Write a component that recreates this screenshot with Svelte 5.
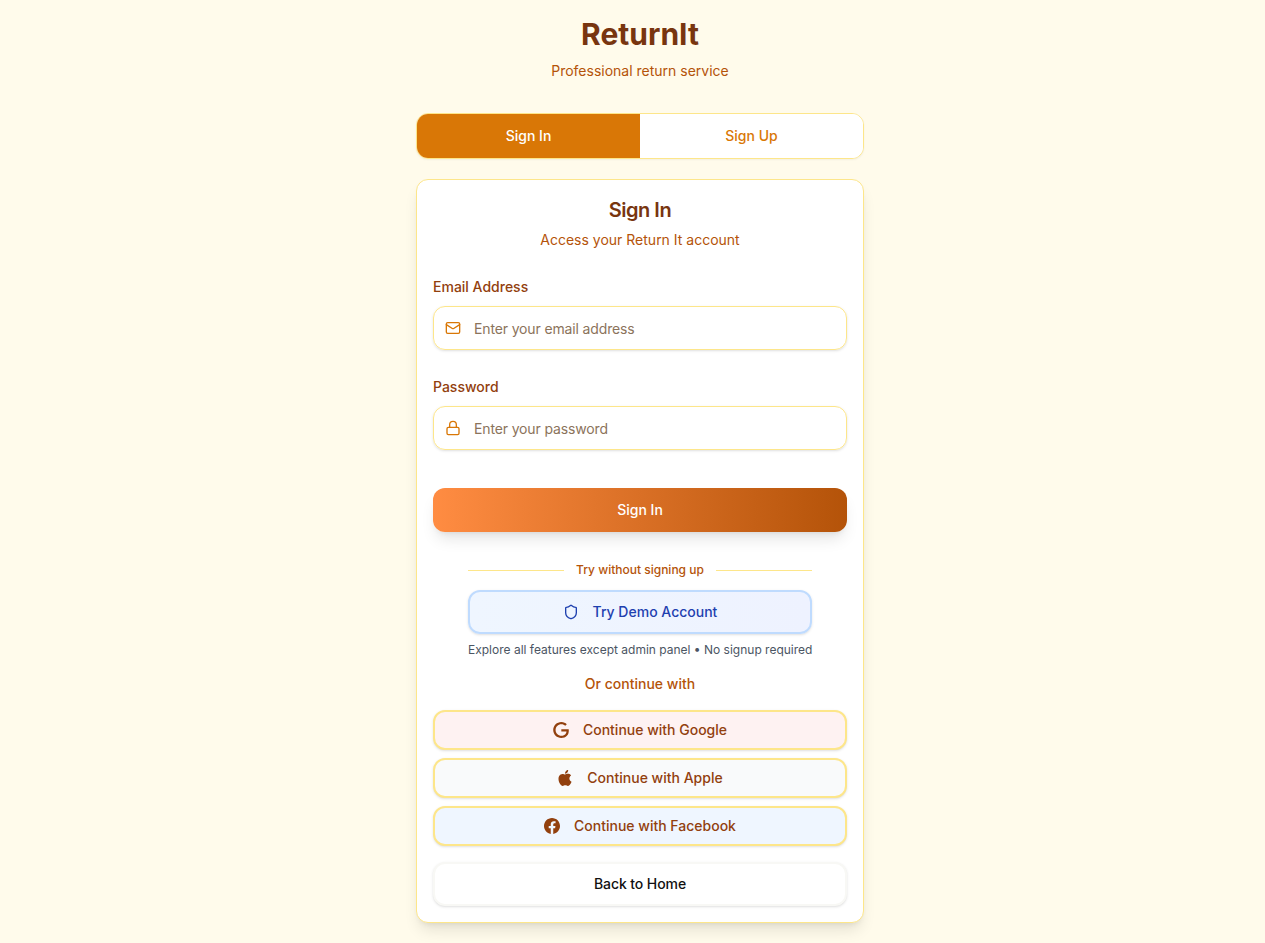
<script>
  let mode = $state('in');
  const fields = [
    { id: 'email', type: 'email', label: 'Email Address', hint: 'Enter your email address' },
    { id: 'password', type: 'password', label: 'Password', hint: 'Enter your password' }
  ];
  const providers = [
    { name: 'Google', tone: 'rose', d: 'M12.48 10.92v3.28h7.84c-.24 1.84-.853 3.187-1.787 4.133-1.147 1.147-2.933 2.4-6.053 2.4-4.827 0-8.6-3.893-8.6-8.72s3.773-8.72 8.6-8.72c2.6 0 4.507 1.027 5.907 2.347l2.307-2.307C18.747 1.44 16.133 0 12.48 0 5.867 0 .307 5.387.307 12s5.56 12 12.173 12c3.573 0 6.267-1.173 8.373-3.36 2.16-2.16 2.84-5.213 2.84-7.667 0-.76-.053-1.467-.173-2.053H12.48z' },
    { name: 'Apple', tone: 'gray', d: 'M12.152 6.896c-.948 0-2.415-1.078-3.96-1.04-2.04.027-3.91 1.183-4.961 3.014-2.117 3.675-.546 9.103 1.519 12.09 1.013 1.454 2.208 3.09 3.792 3.039 1.52-.065 2.09-.987 3.935-.987 1.831 0 2.35.987 3.96.948 1.637-.026 2.676-1.48 3.676-2.948 1.156-1.688 1.636-3.325 1.662-3.415-.039-.013-3.182-1.221-3.22-4.857-.026-3.04 2.48-4.494 2.597-4.559-1.429-2.09-3.623-2.324-4.39-2.376-2-.156-3.675 1.09-4.61 1.09zM15.53 3.83c.843-1.012 1.4-2.427 1.245-3.83-1.207.052-2.662.805-3.532 1.818-.78.896-1.454 2.338-1.273 3.714 1.338.104 2.715-.688 3.559-1.701' },
    { name: 'Facebook', tone: 'blue', d: 'M24 12.073c0-6.627-5.373-12-12-12s-12 5.373-12 12c0 5.99 4.388 10.954 10.125 11.854v-8.385H7.078v-3.47h3.047V9.43c0-3.007 1.792-4.669 4.533-4.669 1.312 0 2.686.235 2.686.235v2.953H15.83c-1.491 0-1.956.925-1.956 1.874v2.25h3.328l-.532 3.47h-2.796v8.385C19.612 23.027 24 18.062 24 12.073z' }
  ];
</script>

<div class="page">
  <main>
    <header>
      <h1>ReturnIt</h1>
      <p>Professional return service</p>
    </header>

    <div class="tabs">
      <button class:active={mode === 'in'} onclick={() => (mode = 'in')}>Sign In</button>
      <button class:active={mode === 'up'} onclick={() => (mode = 'up')}>Sign Up</button>
    </div>

    <section class="card">
      <div class="heading">
        <h2>Sign In</h2>
        <p>Access your Return It account</p>
      </div>

      <form onsubmit={(e) => e.preventDefault()}>
        {#each fields as f}
          <div class="field">
            <label for={f.id}>{f.label}</label>
            <div class="input">
              <svg class="line" viewBox="0 0 24 24">
                {#if f.id === 'email'}
                  <rect width="20" height="16" x="2" y="4" rx="2" />
                  <path d="m22 7-8.97 5.7a1.94 1.94 0 0 1-2.06 0L2 7" />
                {:else}
                  <rect width="18" height="11" x="3" y="11" rx="2" />
                  <path d="M7 11V7a5 5 0 0 1 10 0v4" />
                {/if}
              </svg>
              <input id={f.id} type={f.type} placeholder={f.hint} />
            </div>
          </div>
        {/each}
        <button class="submit">Sign In</button>
      </form>

      <div class="demo">
        <div class="divider"><i></i><span>Try without signing up</span><i></i></div>
        <button class="try">
          <svg class="line" viewBox="0 0 24 24">
            <path d="M20 13c0 5-3.500 7.500-7.660 8.950a1 1 0 0 1-.67-.01C7.500 20.500 4 18 4 13V6a1 1 0 0 1 1-1c2 0 4.500-1.200 6.240-2.720a1.170 1.170 0 0 1 1.520 0C14.510 3.810 17 5 19 5a1 1 0 0 1 1 1z" />
          </svg>
          <span>Try Demo Account</span>
        </button>
        <p>Explore all features except admin panel • No signup required</p>
      </div>

      <p class="or">Or continue with</p>
      <div class="providers">
        {#each providers as p}
          <button class={p.tone}>
            <svg viewBox="0 0 24 24"><path d={p.d} /></svg>
            <span>Continue with {p.name}</span>
          </button>
        {/each}
      </div>
      <button class="home">Back to Home</button>
    </section>
  </main>
</div>

<style>
  :global(body) {
    margin: 0;
    background: #fffbeb;
    overflow: hidden;
  }
  * { box-sizing: border-box; }
  .page {
    --shadow: 0 1px 3px rgb(0 0 0 / .1), 0 1px 2px -1px rgb(0 0 0 / .1);
    width: 1280px;
    height: 943px;
    padding-top: 16px;
    background: #fffbeb;
    font: 14px/20px Inter, sans-serif;
    color: #b45309;
  }
  main { width: 448px; margin: 0 auto; }
  h1, h2, p { margin: 0; text-align: center; }
  h1 { font-size: 30px; line-height: 37px; font-weight: 700; color: #78350f; }
  header p { margin-top: 8px; }
  button {
    font: 500 14px/20px Inter, sans-serif;
    display: flex;
    align-items: center;
    justify-content: center;
    width: 100%;
    padding: 0;
    border-radius: 12px;
    cursor: pointer;
  }
  svg { width: 16px; height: 16px; flex: none; fill: currentColor; }
  .line { fill: none; stroke: currentColor; stroke-width: 2; stroke-linecap: round; stroke-linejoin: round; }
  .tabs {
    display: flex;
    height: 46px;
    margin-top: 32px;
    border: 1px solid #fde68a;
    border-radius: 12px;
    overflow: hidden;
    background: #fff;
    box-shadow: 0 1px 2px rgb(0 0 0 / .05);
  }
  .tabs button { border: 0; border-radius: 0; background: #fff; color: #d97706; }
  .tabs button.active { background: #d97706; color: #fff; }
  .card {
    height: 744px;
    margin-top: 20px;
    padding: 16px;
    border: 1px solid #fde68a;
    border-radius: 12px;
    background: #fff;
    box-shadow: 0 10px 15px -3px rgb(0 0 0 / .1), 0 4px 6px -4px rgb(0 0 0 / .1);
  }
  h2 { font-size: 20px; line-height: 28px; font-weight: 600; letter-spacing: -.5px; color: #78350f; }
  .heading p { margin-top: 6px; }
  .field { margin-bottom: 27px; }
  .heading + form { margin-top: 27px; }
  label { display: block; font-weight: 500; color: #92400e; }
  .input {
    display: flex;
    align-items: center;
    gap: 12px;
    height: 44px;
    margin-top: 9px;
    padding: 0 12px 0 11px;
    border: 1px solid #fde68a;
    border-radius: 12px;
    box-shadow: var(--shadow);
    color: #d97706;
  }
  .input svg { position: relative; top: -.5px; }
  input {
    flex: 1;
    min-width: 0;
    height: 40px;
    padding: 0 1px;
    border: 0;
    outline: 0;
    background: none;
    font: 14px/20px Inter, sans-serif;
    letter-spacing: -.14px;
    color: #78350f;
  }
  input::placeholder { color: #8b735b; opacity: 1; }
  .submit {
    height: 44px;
    margin-top: 38px;
    border: 0;
    color: #fff;
    background: linear-gradient(to right, #ff8c42, #b45309);
    box-shadow: 0 10px 15px -3px rgb(0 0 0 / .1), 0 4px 6px -4px rgb(0 0 0 / .1);
  }
  .demo { width: 344px; margin: 30px auto 0; font-size: 12px; line-height: 16px; }
  .divider { display: flex; align-items: center; gap: 12px; font-weight: 500; white-space: nowrap; }
  .divider i { flex: 1; height: 1px; background: #fde68a; }
  .try {
    gap: 14px;
    height: 44px;
    margin: 12px 0 8px;
    border: 2px solid #bfdbfe;
    background: linear-gradient(to right, #eff6ff, #eef2ff);
    color: #1e40af;
    box-shadow: var(--shadow);
  }
  .demo p { color: #4b5563; white-space: nowrap; }
  .or { margin-top: 16px; font-weight: 500; }
  .providers { display: grid; gap: 8px; margin-top: 16px; }
  .providers button {
    gap: 14px;
    height: 40px;
    border: 2px solid #fde68a;
    color: #92400e;
    box-shadow: var(--shadow);
  }
  .rose { background: #fef2f2; }
  .gray { background: #f9fafb; }
  .blue { background: #eff6ff; }
  .home {
    height: 44px;
    margin-top: 16px;
    border: 2px solid #f8f8f5;
    background: #fff;
    color: #111;
    letter-spacing: -.08px;
    box-shadow: var(--shadow);
  }
</style>
